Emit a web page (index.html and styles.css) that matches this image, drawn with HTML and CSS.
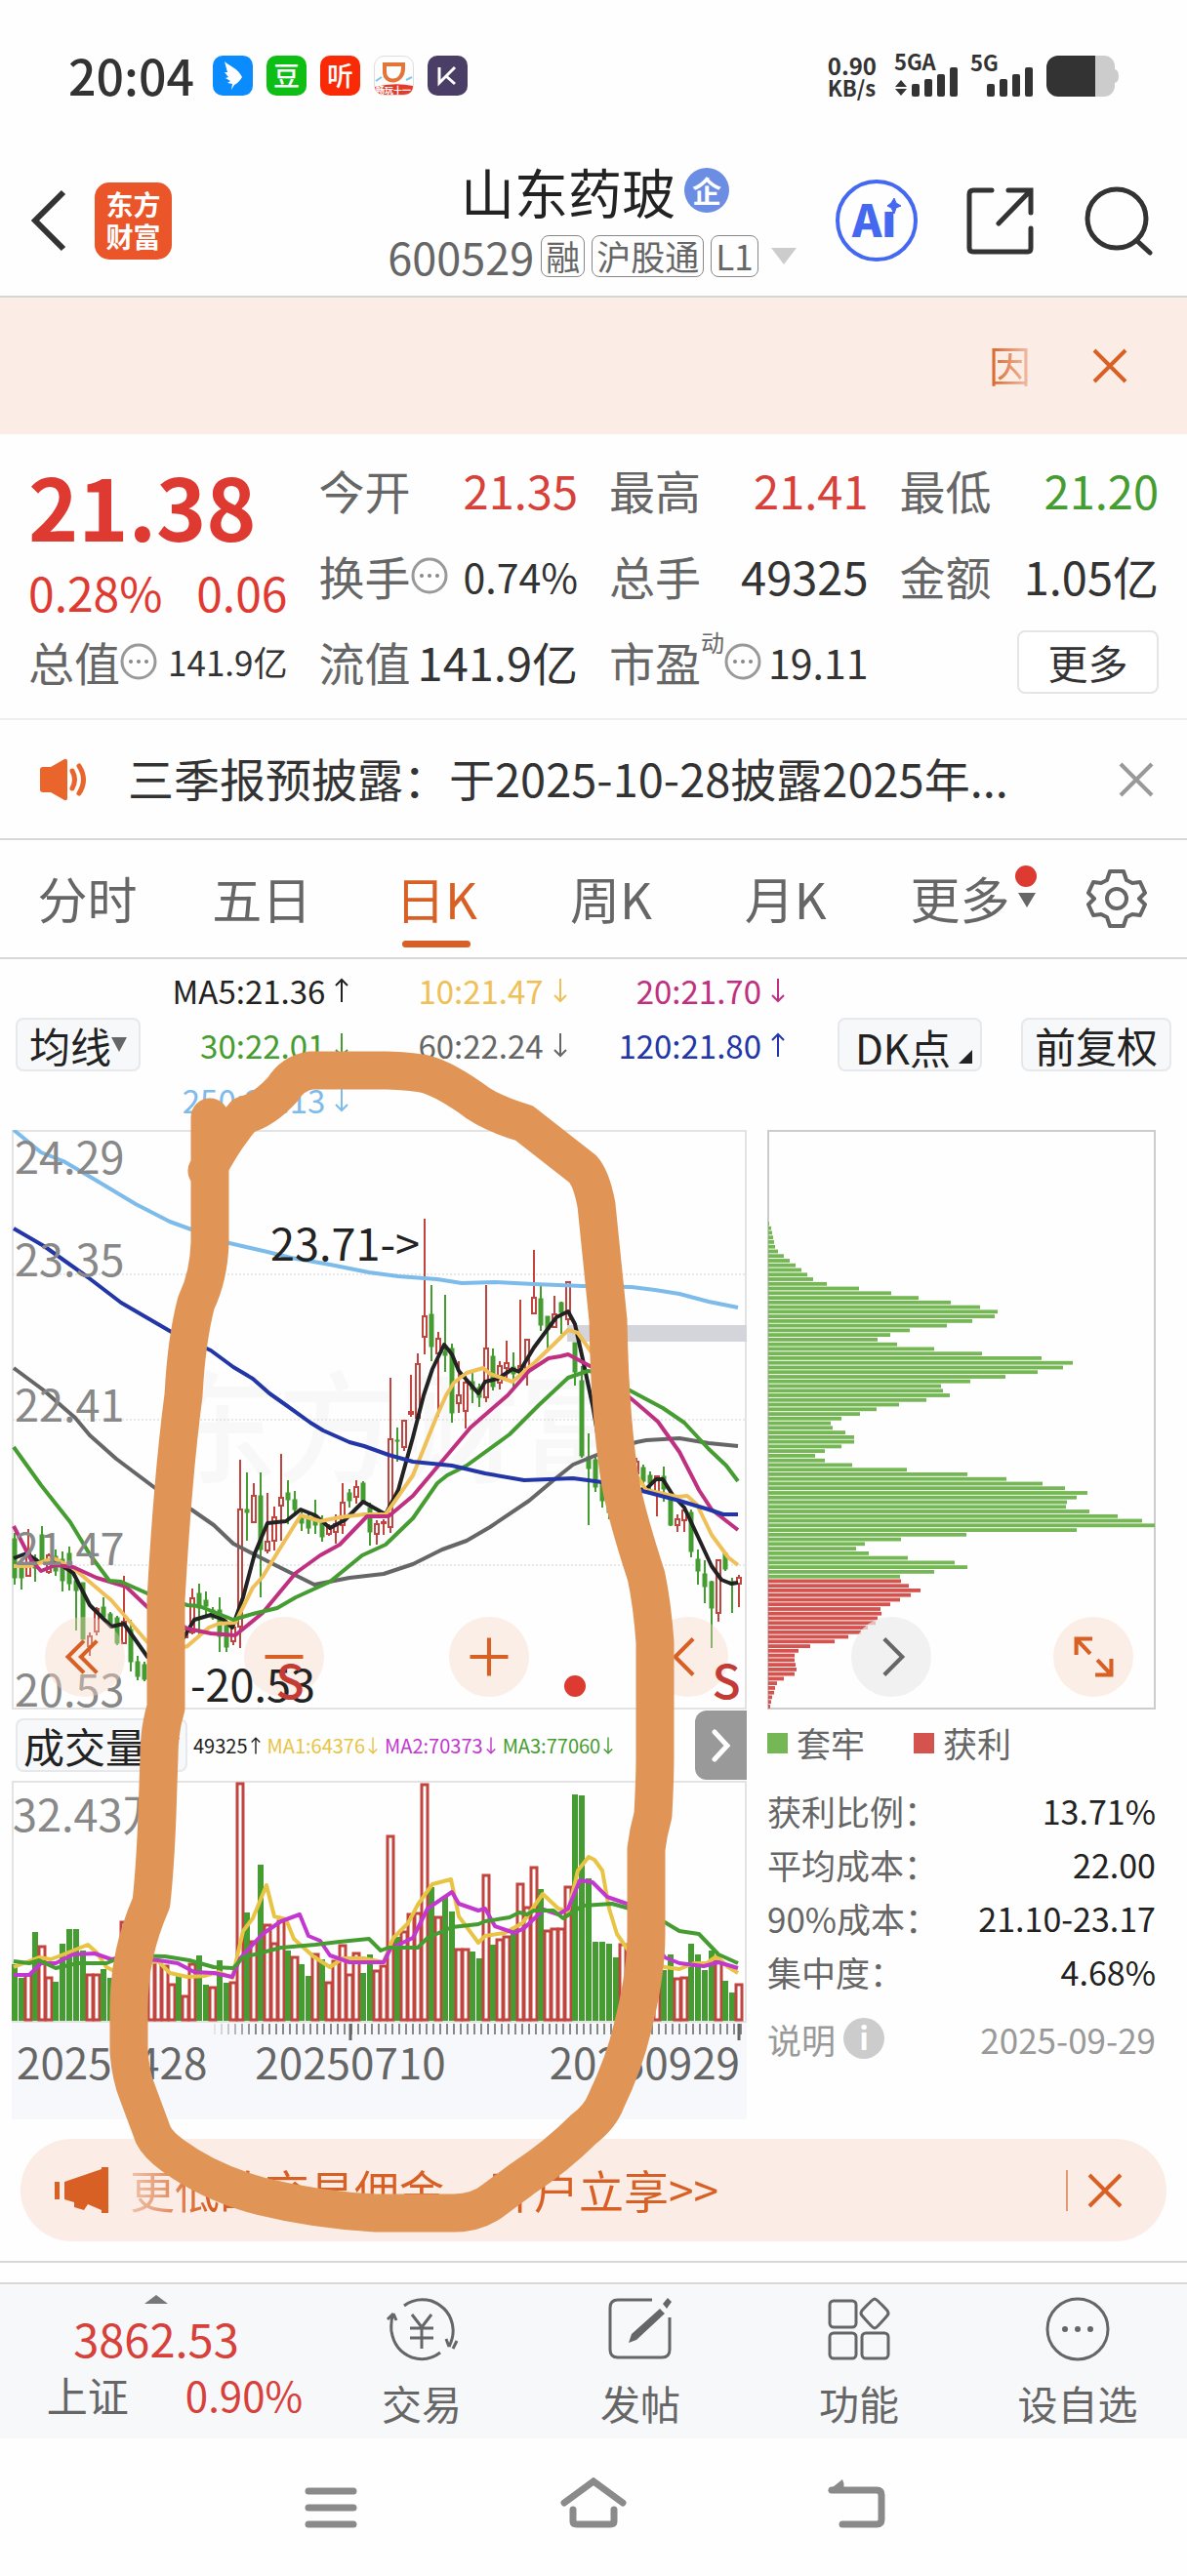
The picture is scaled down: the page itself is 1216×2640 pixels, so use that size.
FILE: index.html
```html
<!DOCTYPE html>
<html lang="zh-CN">
<head>
    <meta charset="UTF-8">
    <meta name="viewport" content="width=device-width, initial-scale=1.0">
    <title>山东药玻 600529</title>
    <link rel="stylesheet" href="styles.css">
</head>
<body>
    <svg class="defs" width="0" height="0" aria-hidden="true">
        <symbol id="up" viewBox="0 0 14 26"><path d="M7 25V2M1 8l6-6 6 6" fill="none" stroke="currentColor" stroke-width="2"/></symbol>
        <symbol id="down" viewBox="0 0 14 26"><path d="M7 1v23M1 18l6 6 6-6" fill="none" stroke="currentColor" stroke-width="2"/></symbol>
        <symbol id="close" viewBox="0 0 36 36"><path d="M2 2l32 32M34 2L2 34" fill="none" stroke="currentColor" stroke-width="4"/></symbol>
        <symbol id="dots" viewBox="0 0 38 38"><circle cx="19" cy="19" r="17" fill="none" stroke="#999" stroke-width="3"/><g fill="#888"><circle cx="11" cy="19" r="2"/><circle cx="19" cy="19" r="2"/><circle cx="27" cy="19" r="2"/></g></symbol>
    </svg>

    <!-- status bar -->
    <div class="status-bar">
        <span class="clock">20:04</span>
        <div class="app-icons">
            <svg viewBox="0 0 41 41"><rect width="41" height="41" rx="10" fill="#0a8cff"/><path d="M12 6c4 4 14 7 18 16-2 4-6 7-8 8l-3 5 1-6-5-1 3-2-5-3 3-1-4-5 3 0z" fill="#fff"/></svg>
            <span class="app app-green">豆</span>
            <span class="app app-red">听</span>
            <svg viewBox="0 0 41 41"><rect x=".5" y=".5" width="40" height="40" rx="10" fill="#fdfdfd" stroke="#ddd"/><path d="M11 9h19v4c0 16-19 16-19 4z" fill="none" stroke="#e37538" stroke-width="4"/><path d="M2 26l6-4M33 25l6-3" stroke="#7cc8e8" stroke-width="2"/><path d="M1 32q20-5 39-1c0 6-4 9-10 9H11c-6 0-9-2-10-8z" fill="#e8382a"/><text x="20" y="39" font-size="9" font-weight="700" fill="#fff" text-anchor="middle">畅玩十一</text></svg>
            <svg viewBox="0 0 41 41"><rect width="41" height="41" rx="10" fill="#4a3d66"/><path d="M12 12v16L28 12M19 21l9 8" fill="none" stroke="#fff" stroke-width="3"/></svg>
        </div>
        <div class="net-speed"><span>0.90</span><span>KB/s</span></div>
        <svg class="signal" viewBox="0 0 66 42"><text x="0" y="15">5GA</text><path d="M1 32l6-7 6 7zM1 34l6 7 6-7z"/><rect x="18" y="29" width="8" height="13" rx="2"/><rect x="31" y="24" width="8" height="18" rx="2"/><rect x="44" y="19" width="8" height="23" rx="2"/><rect x="57" y="12" width="8" height="30" rx="2"/></svg>
        <svg class="signal" viewBox="0 0 66 42"><text x="0" y="16">5G</text><rect x="17" y="29" width="8" height="13" rx="2"/><rect x="30" y="24" width="8" height="18" rx="2"/><rect x="43" y="19" width="8" height="23" rx="2"/><rect x="56" y="12" width="8" height="30" rx="2"/></svg>
        <svg class="battery" viewBox="0 0 75 42"><path d="M49 0h10a11 11 0 0 1 11 11v3q4 1 4 7t-4 7v3a11 11 0 0 1-11 11H49z" fill="#ccc"/><path d="M12 0h38v42H12A12 12 0 0 1 0 30V12A12 12 0 0 1 12 0z" fill="#333"/></svg>
    </div>

    <!-- header -->
    <header class="header">
        <div class="header-left">
            <button type="button" class="icon-btn" aria-label="返回"><svg width="38" height="64" viewBox="0 0 38 64"><path d="M34 3L5 32l29 29" fill="none" stroke="#333" stroke-width="6"/></svg></button>
            <div class="logo">东方<br>财富</div>
        </div>
        <div class="header-title">
            <h1>山东药玻<span class="badge">企</span></h1>
            <div class="stock-code">600529<span class="tag">融</span><span class="tag">沪股通</span><span class="tag">L1</span><i class="tri-down"></i></div>
        </div>
        <div class="header-right">
            <button type="button" class="icon-btn" aria-label="AI"><svg width="84" height="84" viewBox="0 0 84 84"><circle cx="42" cy="42" r="40" fill="none" stroke="#4468f0" stroke-width="4"/><text x="17" y="59" class="ai-text">Aı</text><path d="M60 19l2 5 5 3-5 2-2 6-3-6-4-2 4-3z" fill="#4468f0" stroke="#4468f0" stroke-width="1"/></svg></button>
            <button type="button" class="icon-btn" aria-label="分享"><svg width="70" height="70" viewBox="0 0 70 70"><path d="M26 4H7q-4 0-4 4v55q0 4 4 4h56q3 0 3-4V43M43 4h23v23M65 5L33 38" fill="none" stroke="#333" stroke-width="5" stroke-linecap="round"/></svg></button>
            <button type="button" class="icon-btn" aria-label="搜索"><svg width="72" height="72" viewBox="0 0 72 72"><circle cx="34" cy="34" r="30" fill="none" stroke="#333" stroke-width="5"/><path d="M55 57l13 12" stroke="#333" stroke-width="5" stroke-linecap="round"/></svg></button>
        </div>
    </header>

    <div class="alert-bar">
        <span class="alert-text">因</span>
        <button type="button" class="icon-btn orange" aria-label="关闭"><svg width="36" height="36"><use href="#close"/></svg></button>
    </div>

    <!-- quote -->
    <section class="quote">
        <div class="price-box">
            <div class="price">21.38</div>
            <div class="change"><span>0.28%</span><span>0.06</span></div>
        </div>
        <div class="cell"><span>今开</span><b class="red">21.35</b></div>
        <div class="cell"><span>最高</span><b class="red">21.41</b></div>
        <div class="cell"><span>最低</span><b class="green">21.20</b></div>
        <div class="cell"><span>换手</span><svg class="dots"><use href="#dots"/></svg><b class="mid">0.74%</b></div>
        <div class="cell"><span>总手</span><b>49325</b></div>
        <div class="cell"><span>金额</span><b>1.05亿</b></div>
        <div class="cell"><span>总值</span><svg class="dots"><use href="#dots"/></svg><b class="small">141.9亿</b></div>
        <div class="cell"><span>流值</span><b>141.9亿</b></div>
        <div class="cell"><span>市盈</span><sup>动</sup><svg class="dots"><use href="#dots"/></svg><b class="mid">19.11</b></div>
        <div class="cell cell-more"><button type="button" class="more-btn">更多</button></div>
    </section>

    <div class="notice">
        <svg width="54" height="44" viewBox="0 0 54 44"><path d="M2 12q0-3 3-3h8L27 1q3-1 3 2v38q0 3-3 2L13 35H5q-3 0-3-3z" fill="#e9652b"/><path d="M35 13q5 9 0 18M42 8q9 14 0 28" fill="none" stroke="#e9652b" stroke-width="5" stroke-linecap="round"/></svg>
        <p>三季报预披露：于2025-10-28披露2025年...</p>
        <button type="button" class="icon-btn gray" aria-label="关闭"><svg width="36" height="36"><use href="#close"/></svg></button>
    </div>

    <nav class="tabs">
        <a href="#">分时</a>
        <a href="#">五日</a>
        <a href="#" class="active">日K</a>
        <a href="#">周K</a>
        <a href="#">月K</a>
        <a href="#" class="tab-more">更多<i class="tri-small"></i><i class="red-dot"></i></a>
        <button type="button" class="icon-btn" aria-label="设置"><svg width="62" height="62" viewBox="0 0 62 62"><path d="M24 3h14l3 9 6 3 8-1 5 11-6 6 6 6-5 11-8-1-6 3-3 9H24l-3-9-6-3-8 1-5-11 6-6-6-6 5-11 8 1 6-3z" fill="none" stroke="#666" stroke-width="4" stroke-linejoin="round"/><circle cx="31" cy="31" r="10" fill="none" stroke="#666" stroke-width="4"/></svg></button>
    </nav>

    <!-- charts -->
    <section class="chart-section">
        <div class="toolbar">
            <button type="button" class="chip">均线<i class="tri-small"></i></button>
            <div class="ma-list">
                <span class="c-black">MA5:21.36<svg class="arrow"><use href="#up"/></svg></span>
                <span class="c-yellow">10:21.47<svg class="arrow"><use href="#down"/></svg></span>
                <span class="c-magenta">20:21.70<svg class="arrow"><use href="#down"/></svg></span>
                <span class="c-green">30:22.01<svg class="arrow"><use href="#down"/></svg></span>
                <span class="c-gray">60:22.24<svg class="arrow"><use href="#down"/></svg></span>
                <span class="c-blue">120:21.80<svg class="arrow"><use href="#up"/></svg></span>
                <span class="c-sky">250:22.13<svg class="arrow"><use href="#down"/></svg></span>
            </div>
            <button type="button" class="chip chip-dk">DK点<i class="tri-corner"></i></button>
            <button type="button" class="chip">前复权</button>
        </div>

        <div class="charts">
            <div class="left-col">
                <div class="k-chart">
                    <svg id="kline" viewBox="0 0 753 594"></svg>
                    <button type="button" class="round-btn pos-1" aria-label="快退"><svg viewBox="0 0 80 80"><path d="M39 24L23 40l16 16M52 24L36 40l16 16"/></svg></button>
                    <button type="button" class="round-btn pos-2" aria-label="缩小"><svg viewBox="0 0 80 80"><path d="M21 40h38"/></svg></button>
                    <button type="button" class="round-btn pos-3" aria-label="放大"><svg viewBox="0 0 80 80"><path d="M21 40h38M40 21v38"/></svg></button>
                    <button type="button" class="round-btn pos-4" aria-label="左移"><svg viewBox="0 0 80 80"><path d="M45 22L27 40l18 18"/></svg></button>
                    <svg class="k-marks" viewBox="0 0 753 594">
                        <text x="311" y="586" text-anchor="end" fill="#222">-20.53</text>
                        <text x="285" y="583" text-anchor="middle" fill="#c43b35" class="mark-s">S</text>
                        <text x="732" y="583" text-anchor="middle" fill="#c43b35" class="mark-s">S</text>
                        <circle cx="577" cy="570" r="11" fill="#dd3a32"/>
                    </svg>
                </div>
                <div class="vol-head">
                    <button type="button" class="chip chip-vol">成交量<i class="tri-small"></i></button>
                    <span class="c-black">49325<svg class="arrow"><use href="#up"/></svg></span>
                    <span class="c-gold">MA1:64376<svg class="arrow"><use href="#down"/></svg></span>
                    <span class="c-purple">MA2:70373<svg class="arrow"><use href="#down"/></svg></span>
                    <span class="c-green">MA3:77060<svg class="arrow"><use href="#down"/></svg></span>
                    <button type="button" class="side-btn" aria-label="展开"><svg width="20" height="34" viewBox="0 0 20 34"><path d="M3 3l13 14L3 31" fill="none" stroke="#fff" stroke-width="5" stroke-linecap="round"/></svg></button>
                </div>
                <svg id="volume" viewBox="0 0 753 347"></svg>
            </div>

            <div class="right-col">
                <div class="chip-chart">
                    <svg id="chips" viewBox="0 0 398 594"></svg>
                    <button type="button" class="round-btn round-gray pos-5" aria-label="下一个"><svg viewBox="0 0 80 80"><path d="M33 22l18 18-18 18"/></svg></button>
                    <button type="button" class="round-btn pos-6" aria-label="全屏"><svg viewBox="0 0 80 80"><path d="M23 38V22h16M23 22l14 15M44 43l14 15M42 58h16V42"/></svg></button>
                </div>
                <div class="legend"><span><i class="sq sq-green"></i>套牢</span><span><i class="sq sq-red"></i>获利</span></div>
                <dl class="stats">
                    <dt>获利比例：</dt><dd>13.71%</dd>
                    <dt>平均成本：</dt><dd>22.00</dd>
                    <dt>90%成本：</dt><dd>21.10-23.17</dd>
                    <dt>集中度：</dt><dd>4.68%</dd>
                </dl>
                <div class="explain"><span>说明</span><i class="info">i</i><time>2025-09-29</time></div>
            </div>
        </div>

        <div class="promo">
            <svg width="56" height="48" viewBox="0 0 56 48"><path d="M0 15h5v18H0zM10 15L48 2V0h7v47h-7v-3L34 38l-4 6-10-3 0-5-10-3z" fill="#d96024"/></svg>
            <a href="#">更低的交易佣金，开户立享&gt;&gt;</a>
            <button type="button" class="icon-btn orange promo-close" aria-label="关闭"><svg width="36" height="36"><use href="#close"/></svg></button>
        </div>

        <!-- hand drawn marker -->
        <svg class="marker" viewBox="0 0 1216 1335"><path d="M215 162V290Q214 325 201 352Q191 390 188 447Q177 530 170 657V767Q163 790 163 817L161 877Q159 930 155 967Q143 995 138 1019Q132 1045 132 1077V1120Q134 1145 141 1162L157 1205Q162 1215 177 1226Q215 1254 268 1268Q325 1282 385 1285H465Q490 1285 508 1270L535 1250Q570 1227 598 1199Q615 1186 621 1170Q640 1130 648 1095Q662 1040 662 1000V912Q664 895 669 877Q671 840 671 817V700Q668 660 662 632Q645 580 637 544Q625 480 623 370L611 252Q606 225 597 215L537 168Q500 157 482 142Q450 120 432 117Q410 114 395 114H318Q300 117 290 133Q270 155 250 160Q230 182 212 217"/></svg>
    </section>

    <!-- bottom bar -->
    <div class="bottom-bar">
        <div class="index-box">
            <i class="tri-up"></i>
            <strong>3862.53</strong>
            <div class="index-row"><span>上证</span><span class="red">0.90%</span></div>
        </div>
        <a href="#"><svg viewBox="0 0 76 68"><path d="M20 10Q32 1 48 5Q68 13 70 33Q71 42 66 52M70 54l4-8M66 52l-3-8M57 58Q44 68 28 63Q10 56 7 36Q6 26 9 18M9 18l-6 6M9 18l3 7" fill="none" stroke="#666" stroke-width="3"/><path d="M28 19l10 13 10-13M26 33h24M26 43h24M38 32v22" fill="none" stroke="#666" stroke-width="3"/></svg>交易</a>
        <a href="#"><svg viewBox="0 0 76 68"><path d="M50 4H15q-8 0-8 8v43q0 8 8 8h45q8 0 8-8V22" fill="none" stroke="#666" stroke-width="3"/><path d="M61 8l5-6 4 4-5 7zM58 13l5 5-29 27-8 3 3-9z" fill="#666"/></svg>发帖</a>
        <a href="#"><svg viewBox="0 0 76 68"><g fill="none" stroke="#666" stroke-width="3"><rect x="8" y="5" width="27" height="27" rx="4"/><rect x="8" y="38" width="27" height="26" rx="4"/><rect x="41" y="38" width="27" height="26" rx="4"/><path d="M54 3q2 0 13 12 2 3 0 5-11 13-13 13t-13-13q-2-2 0-5Q52 3 54 3z"/></g></svg>功能</a>
        <a href="#"><svg viewBox="0 0 76 68"><circle cx="38" cy="34" r="31" fill="none" stroke="#666" stroke-width="3"/><g fill="#666"><circle cx="25" cy="34" r="3"/><circle cx="38" cy="34" r="3"/><circle cx="51" cy="34" r="3"/></g></svg>设自选</a>
    </div>

    <div class="system-nav">
        <button type="button" class="icon-btn" aria-label="菜单"><svg width="68" height="52" viewBox="0 0 68 52"><path d="M11 14h46M11 31h46M11 48h46" stroke="#8a8a8a" stroke-width="7" stroke-linecap="round"/></svg></button>
        <button type="button" class="icon-btn" aria-label="主页"><svg width="68" height="52" viewBox="0 0 68 52"><path d="M4 26L34 4l30 22M13 33v12q0 3 4 3h34q4 0 4-3V33" fill="none" stroke="#8a8a8a" stroke-width="7" stroke-linecap="round"/></svg></button>
        <button type="button" class="icon-btn" aria-label="后退"><svg width="68" height="52" viewBox="0 0 68 52"><path d="M9 13h46q5 0 5 5v25q0 5-5 5H20" fill="none" stroke="#8a8a8a" stroke-width="7" stroke-linecap="round"/><path d="M5 14L20 2q4 8-2 14z" fill="#8a8a8a"/></svg></button>
    </div>

    <script src="script.js"></script>
</body>
</html>
```
FILE: styles.css
```css
* {
    box-sizing: border-box;
}
body {
    margin: 0;
    background: #fefefe;
    color: #333;
    font-family: "Noto Sans CJK SC", "Noto Sans", sans-serif;
}
a {
    color: inherit;
    text-decoration: none;
}
button {
    font-family: inherit;
    color: inherit;
    padding: 0;
    cursor: pointer;
}
svg {
    display: block;
}
svg text {
    font-family: "Noto Sans CJK SC", "Noto Sans", sans-serif;
}
.defs {
    position: absolute;
}
.icon-btn {
    border: none;
    background: none;
    display: flex;
    align-items: center;
    justify-content: center;
}
.red {
    color: #d8403a;
}
.green {
    color: #459c30;
}
.orange {
    color: #d96024;
}
.gray {
    color: #999;
}
.c-black { color: #222; }
.c-yellow { color: #efbf58; }
.c-gold { color: #e8c444; }
.c-magenta { color: #c03080; }
.c-purple { color: #c238cf; }
.c-green { color: #459c30; }
.c-gray { color: #666; }
.c-blue { color: #2236a8; }
.c-sky { color: #7cbbea; }

/* triangles */
.tri-down {
    border: 13px solid transparent;
    border-top: 17px solid #ccc;
    border-bottom: 0;
}
.tri-small {
    border: 9px solid transparent;
    border-top: 15px solid #666;
    border-bottom: 0;
}
.tri-up {
    border: 12px solid transparent;
    border-bottom: 9px solid #777;
    border-top: 0;
}
.tri-corner {
    border: 7px solid #222;
    border-top-color: transparent;
    border-left-color: transparent;
}

/* status bar */
.status-bar {
    display: flex;
    align-items: center;
    height: 155px;
    padding: 0 69px 0 70px;
}
.clock {
    font-size: 50px;
    line-height: 60px;
    font-weight: 500;
    padding-bottom: 3px;
}
.app-icons {
    display: flex;
    gap: 14px;
    margin-left: 19px;
    flex: 1;
}
.app-icons svg {
    width: 41px;
    height: 41px;
}
.app {
    width: 41px;
    height: 41px;
    border-radius: 10px;
    color: #fff;
    font-size: 27px;
    line-height: 40px;
    font-weight: 500;
    text-align: center;
}
.app-green {
    background: #0dbe14;
}
.app-red {
    background: #fb2a06;
}
.net-speed {
    display: flex;
    flex-direction: column;
    font-size: 24px;
    line-height: 22px;
    font-weight: 700;
    margin-right: 18px;
}
.net-speed span + span {
    font-size: 22px;
}
.signal {
    width: 66px;
    height: 42px;
    margin-right: 12px;
    fill: #333;
    overflow: visible;
}
.signal text {
    font-size: 22px;
    font-weight: 700;
}
.battery {
    width: 75px;
    height: 42px;
}

/* header */
.header {
    display: grid;
    grid-template-columns: 1fr auto 1fr;
    align-items: center;
    height: 150px;
    padding: 0 34px 6px 31px;
    border-bottom: 2px solid #d5d5d5;
}
.header-left {
    display: flex;
    align-items: center;
    gap: 28px;
}
.logo {
    width: 79px;
    height: 79px;
    padding-top: 6px;
    border-radius: 15px;
    background: #ea5629;
    color: #fff;
    font-size: 28px;
    line-height: 33px;
    font-weight: 700;
    text-align: center;
}
.header-title {
    padding-top: 5px;
}
.header-title h1 {
    display: flex;
    align-items: center;
    justify-content: center;
    gap: 9px;
    margin: 0;
    padding-left: 6px;
    font-size: 55px;
    line-height: 68px;
    font-weight: 400;
    color: #222;
}
.badge {
    width: 46px;
    height: 46px;
    border-radius: 50%;
    background: #6b8ee4;
    color: #fff;
    font-size: 30px;
    line-height: 44px;
    font-weight: 700;
    text-align: center;
}
.stock-code {
    display: flex;
    align-items: center;
    justify-content: center;
    font-size: 45px;
    line-height: 68px;
    color: #666;
}
.tag {
    height: 43px;
    margin-left: 7px;
    padding: 0 4px;
    border: 1px solid #888;
    border-radius: 8px;
    font-size: 35px;
    line-height: 40px;
}
.stock-code .tri-down {
    margin-left: 13px;
}
.header-right {
    display: flex;
    align-items: center;
    justify-content: flex-end;
    gap: 50px;
}
.header-right .ai-text {
    fill: #4468f0;
    font-size: 46px;
    font-weight: 900;
}

.alert-bar {
    display: flex;
    align-items: center;
    justify-content: flex-end;
    gap: 63px;
    height: 140px;
    padding-right: 61px;
    background: #fbede5;
}
.alert-text {
    color: #d96024;
    font-size: 43px;
    line-height: 64px;
    padding-bottom: 4px;
    -webkit-mask-image: linear-gradient(to right, #000, rgba(0, 0, 0, 0.3));
    mask-image: linear-gradient(to right, #000, rgba(0, 0, 0, 0.3));
}

/* quote */
.quote {
    display: grid;
    grid-template-columns: repeat(4, 1fr);
    grid-auto-rows: 88px;
    column-gap: 32px;
    padding: 13px 29px 14px;
    border-bottom: 2px solid #eee;
}
.price-box {
    grid-row: span 2;
    color: #df3a32;
}
.price {
    font-size: 87px;
    line-height: 118px;
    font-weight: 700;
}
.change {
    display: flex;
    justify-content: space-between;
    font-size: 48px;
    line-height: 60px;
}
.cell {
    display: flex;
    align-items: center;
    font-size: 47px;
    line-height: 60px;
    color: #666;
    white-space: nowrap;
}
.cell b {
    margin-left: auto;
    font-weight: 400;
    color: #333;
}
.cell b.red {
    color: #d8403a;
}
.cell b.green {
    color: #459c30;
}
.cell b.mid {
    font-size: 41px;
}
.cell b.small {
    font-size: 35px;
}
.cell sup {
    align-self: flex-start;
    font-size: 24px;
    line-height: 48px;
}
.dots {
    width: 38px;
    height: 38px;
    flex: none;
}
.cell-more {
    justify-content: flex-end;
}
.more-btn {
    width: 145px;
    height: 65px;
    border: 2px solid #e5e5e5;
    border-radius: 8px;
    background: #fff;
    color: #333;
    font-size: 41px;
    line-height: 56px;
}

.notice {
    display: flex;
    align-items: center;
    height: 123px;
    padding: 0 34px 0 39px;
    border-bottom: 2px solid #d8d8d8;
}
.notice p {
    flex: 1;
    margin: 0 0 0 38px;
    padding-bottom: 4px;
    font-size: 47px;
    line-height: 60px;
}

/* tabs */
.tabs {
    display: grid;
    grid-template-columns: repeat(6, 5fr) 4fr;
    align-items: stretch;
    height: 122px;
    border-bottom: 2px solid #d8d8d8;
    font-size: 51px;
    line-height: 118px;
    text-align: center;
    color: #666;
}
.tabs a {
    position: relative;
}
.tabs .active {
    color: #d96024;
}
.active::after {
    content: "";
    position: absolute;
    left: 50%;
    bottom: 10px;
    width: 70px;
    height: 7px;
    margin-left: -35px;
    border-radius: 4px;
    background: #d96024;
}
.tab-more .tri-small {
    position: absolute;
    right: 12px;
    top: 54px;
}
.red-dot {
    position: absolute;
    right: 11px;
    top: 26px;
    width: 22px;
    height: 22px;
    border-radius: 50%;
    background: #dd3a32;
}

/* toolbar */
.chart-section {
    position: relative;
    padding-bottom: 20px;
    border-bottom: 2px solid #d8d8d8;
}
.toolbar {
    display: flex;
    align-items: center;
    height: 175px;
    padding: 0 16px;
}
.chip {
    display: flex;
    align-items: center;
    justify-content: center;
    height: 55px;
    padding: 0 12px;
    border: 2px solid #e6e8eb;
    border-radius: 8px;
    background: #f7f8fa;
    color: #222;
    font-size: 42px;
    line-height: 47px;
    white-space: nowrap;
}
.chip-dk {
    width: 148px;
    margin: 0 40px 0 54px;
    align-items: flex-end;
    padding: 0 4px 0 12px;
}
.chip-dk .tri-corner {
    margin: 0 0 6px 8px;
}
.toolbar .chip .tri-small {
    border-left-width: 8px;
    border-right-width: 8px;
}
.ma-list {
    flex: 1;
    display: grid;
    grid-template-columns: 213fr 223fr 223fr;
    font-size: 33px;
    line-height: 56px;
}
.ma-list span {
    display: flex;
    align-items: center;
    justify-content: flex-end;
}
.arrow {
    width: 14px;
    height: 26px;
    margin-left: 10px;
}

/* charts */
.charts {
    display: flex;
    gap: 21px;
    padding: 0 32px 0 12px;
}
.left-col {
    flex: 753;
    min-width: 0;
}
.right-col {
    flex: 398;
    min-width: 0;
    font-size: 35px;
    color: #666;
}
.k-chart,
.chip-chart {
    position: relative;
}
.k-chart svg,
.chip-chart svg,
#volume {
    width: 100%;
    height: auto;
}
.k-marks {
    position: absolute;
    left: 0;
    top: 0;
    pointer-events: none;
}
.k-chart text {
    font-size: 45px;
}
.k-chart .mark-s {
    font-size: 48px;
    font-weight: 500;
}
.k-chart .watermark {
    font-size: 124px;
    font-weight: 500;
    fill: #f8f8f8;
}
.round-btn {
    position: absolute;
    bottom: 13px;
    width: 82px;
    height: 82px;
    margin-left: -41px;
    border: none;
    border-radius: 50%;
    background: rgba(245, 214, 197, 0.4);
}
.round-btn path {
    fill: none;
    stroke: #d96024;
    stroke-width: 4;
}
.round-gray {
    background: rgba(235, 235, 235, 0.7);
}
.round-gray path {
    stroke: #666;
}
.pos-1 { left: 10%; }
.pos-2 { left: 37%; }
.pos-3 { left: 65%; }
.pos-4 { left: 92%; }
.pos-5 { left: 32%; }
.pos-6 { left: 84%; }

.vol-head {
    display: flex;
    align-items: center;
    height: 73px;
    padding-left: 4px;
    font-size: 20px;
    line-height: 40px;
}
.chip-vol {
    width: 176px;
    padding: 0 6px;
    justify-content: space-between;
    margin-right: 6px;
}
.vol-head span {
    display: flex;
    align-items: center;
    margin-right: 7px;
}
.vol-head .arrow {
    width: 10px;
    margin-left: 3px;
}
.side-btn {
    display: flex;
    align-items: center;
    justify-content: center;
    width: 53px;
    height: 71px;
    margin-left: auto;
    border: none;
    border-radius: 12px 0 0 12px;
    background: #999;
}
.legend {
    display: flex;
    gap: 50px;
    height: 68px;
    align-items: center;
}
.legend span {
    display: flex;
    align-items: center;
    gap: 9px;
    line-height: 40px;
}
.sq {
    width: 21px;
    height: 21px;
}
.sq-green {
    background: #74b754;
}
.sq-red {
    background: #d4534e;
}
.stats {
    display: grid;
    grid-template-columns: auto auto;
    margin: 8px 0 0;
    line-height: 55px;
}
.stats dd {
    margin: 0;
    font-size: 34px;
    text-align: right;
    color: #222;
}
.explain {
    display: flex;
    align-items: center;
    height: 82px;
    color: #999;
}
.explain time {
    margin-left: auto;
}
.info {
    width: 42px;
    height: 42px;
    margin-left: 8px;
    border-radius: 50%;
    background: #ccc;
    color: #fff;
    font-size: 32px;
    line-height: 39px;
    font-style: normal;
    font-weight: 700;
    text-align: center;
}

.promo {
    display: flex;
    align-items: center;
    height: 105px;
    margin: 20px 21px 0;
    padding: 0 45px 0 35px;
    border-radius: 53px;
    background: #fbede5;
}
.promo a {
    flex: 1;
    margin-left: 21px;
    padding-bottom: 4px;
    color: #d96024;
    font-size: 46px;
    line-height: 60px;
    -webkit-mask-image: linear-gradient(to right, rgba(0, 0, 0, 0.3), #000 80px);
    mask-image: linear-gradient(to right, rgba(0, 0, 0, 0.3), #000 80px);
}
.promo-close {
    height: 42px;
    padding-left: 20px;
    border-left: 2px solid #e09a74;
}
.marker {
    position: absolute;
    left: 0;
    top: 0;
    width: 100%;
    height: auto;
    pointer-events: none;
}
.marker path {
    fill: none;
    stroke: #e09556;
    stroke-width: 39;
    stroke-linecap: round;
    stroke-linejoin: round;
}

/* bottom bar */
.bottom-bar {
    display: grid;
    grid-template-columns: 10fr repeat(4, 7fr);
    height: 160px;
    margin-top: 20px;
    border-top: 2px solid #d8d8d8;
    background: #f7f8fa;
    color: #666;
}
.bottom-bar a {
    display: flex;
    flex-direction: column;
    align-items: center;
    padding-top: 12px;
    font-size: 41px;
    line-height: 56px;
}
.bottom-bar a svg {
    width: 76px;
    height: 68px;
    margin-bottom: 13px;
}
.index-box {
    display: flex;
    flex-direction: column;
    align-items: center;
    padding-top: 11px;
    line-height: 58px;
}
.index-box strong {
    margin-top: 6px;
    font-size: 47px;
    font-weight: 400;
    color: #d8403a;
}
.index-row {
    display: flex;
    gap: 58px;
    padding-left: 38px;
    font-size: 42px;
}

.system-nav {
    display: flex;
    justify-content: center;
    align-items: center;
    gap: 201px;
    height: 132px;
}
```
FILE: script.js
```js
const RED = '#c2443e';
const GREEN = '#459c30';
const STEP = 7;

// candles: [up?, high, low, bodyTop, bodyBottom]
const candles = [
    [0,413,466,419,459],[0,439,471,445,459],[1,409,458,432,457],[0,435,463,439,449],[0,406,444,415,442],[1,434,455,436,453],[0,430,457,437,452],
    [0,432,473,440,462],[0,427,472,434,465],[0,459,513,462,472],[0,464,522,464,522],[1,515,539,519,529],[1,489,518,491,514],[0,479,502,489,499],
    [0,494,509,496,507],[0,498,528,500,526],[1,457,526,504,526],[0,502,555,512,545],[0,539,564,545,560],[0,545,565,548,563],[0,540,560,545,555],
    [1,530,556,535,550],[0,525,556,530,550],[0,520,552,525,545],[1,515,540,520,538],[1,510,521,512,520],[1,470,517,480,515],[0,465,519,475,490],
    [0,473,499,482,488],[0,489,502,492,500],[0,479,535,492,519],[0,502,535,508,530],[1,505,528,510,524],[1,338,531,389,509],[0,351,421,389,392],
    [1,362,402,375,402],[0,351,479,375,430],[1,372,434,422,431],[1,386,431,397,421],[1,332,421,377,385],[0,359,404,372,379],[0,370,396,379,389],
    [0,388,411,395,403],[0,392,414,398,408],[0,379,414,395,405],[0,395,422,400,417],[1,404,416,406,414],[1,394,424,404,412],[1,362,414,382,405],
    [0,368,387,372,380],[1,359,383,366,376],[0,360,382,362,380],[0,382,426,387,412],[1,400,425,404,414],[1,399,415,402,403],[1,254,413,317,407],
    [0,305,340,318,319],[1,297,329,298,325],[1,251,294,289,291],[1,229,295,240,295],[1,91,230,191,212],[0,159,237,189,222],[1,207,294,214,229],
    [0,169,248,227,231],[0,219,300,224,290],[1,237,290,272,280],[1,252,306,259,288],[0,249,280,258,266],[0,260,284,264,274],[1,159,279,224,274],
    [0,224,267,232,263],[1,237,266,242,259],[1,216,256,239,244],[0,228,264,243,250],[1,174,250,242,245],[1,214,262,215,244],[1,123,189,172,188],
    [0,157,206,173,200],[0,191,227,191,204],[1,170,203,189,202],[0,176,209,177,187],[1,155,200,156,194],[0,218,262,218,248],[0,242,336,257,334],
    [0,311,405,335,347],[0,335,371,338,366],[0,360,387,362,380],[0,379,399,381,392],[0,385,405,388,400],[1,375,400,380,395],[0,350,385,355,380],
    [1,336,355,340,352],[0,343,365,346,360],[0,350,369,354,362],[1,355,396,355,372],[0,345,381,355,368],[0,369,406,378,405],[1,394,412,399,405],
    [1,385,412,390,400],[0,389,438,392,432],[0,430,466,440,452],[0,441,485,455,468],[0,462,531,463,490],[1,440,504,441,495],[0,432,452,434,450],
    [0,459,495,463,466],[1,456,489,459,465]
];

// moving average lines of the price chart
const maLines = [
    ['#7cbbea', '2,0 30,23 53,32 87,52 127,76 162,94 184,102 223,116 262,125 286,131 326,138 366,146 396,150 436,153 461,157 495,156 535,158 585,160 635,161 659,164 684,168 714,176 744,182'],
    ['#666', '2,244 33,267 50,282 65,295 80,313 107,337 147,367 184,389 207,405 227,424 272,447 310,466 346,459 381,455 411,445 441,430 466,421 490,407 530,380 555,359 575,343 602,332 640,320 650,318 684,316 714,321 744,324'],
    ['#222', '2,439 15,434 28,443 45,442 63,454 80,487 102,509 115,506 139,540 160,545 177,519 187,502 204,497 217,502 226,510 237,479 249,434 262,403 281,401 296,389 311,395 326,408 341,400 360,381 383,394 396,369 411,315 422,272 431,245 443,220 451,230 458,247 478,270 485,258 498,255 513,245 520,248 535,223 558,192 570,186 577,199 585,235 595,282 602,322 620,365 640,370 651,367 660,358 667,358 677,374 689,387 704,419 717,447 727,461 737,465 744,464'],
    ['#efbf58', '2,447 18,447 43,439 63,449 102,482 139,525 160,535 180,529 202,510 212,506 229,505 247,469 257,458 276,427 296,395 316,401 336,397 361,394 383,394 411,354 436,292 445,272 453,259 466,249 483,244 490,250 513,258 535,239 555,220 570,205 580,208 596,231 625,330 650,369 682,376 692,375 702,384 717,415 734,438 744,446'],
    ['#c03080', '2,406 20,441 30,452 45,446 63,448 87,459 117,468 139,489 180,511 204,516 229,518 257,495 291,454 316,436 336,425 364,396 386,396 411,375 443,337 470,305 508,272 530,247 550,234 562,232 570,230 598,245 640,280 662,299 684,330 704,369 717,389 744,410'],
    ['#459c30', '2,325 30,364 60,402 80,435 100,462 112,463 139,475 180,487 192,488 227,502 247,496 272,490 291,479 326,463 359,436 383,425 411,398 436,362 446,354 466,344 510,312 540,282 570,254 590,247 598,248 637,269 667,285 689,300 714,327 732,344 744,360'],
    ['#2236a8', '2,101 33,119 78,151 112,177 167,209 204,226 227,243 247,255 264,270 281,282 306,300 319,308 346,320 361,324 386,333 411,340 451,344 485,352 525,359 575,357 605,361 650,371 684,380 714,389 729,394 744,394']
];

// volume bars, height in px, negative = down day
const volumes = [
    -58,-44,48,-91,77,45,-40,-79,-94,-94,-72,48,48,-53,-44,-58,102,62,-58,-55,62,62,57,38,-46,26,59,-67,-37,35,-62,-39,40,
    244,-111,82,-160,99,80,103,-72,66,-58,-46,69,-63,40,62,78,48,70,-49,-68,52,57,190,-86,92,110,111,243,-137,107,-128,-112,
    74,74,-71,-64,150,-78,84,87,-96,141,117,158,-135,93,95,95,138,-232,-231,-146,-81,-81,-79,-65,79,-68,65,-58,-62,68,
    -52,-68,44,45,-79,-68,-52,-72,62,-41,-29,38
];

const volLines = [
    ['#e8c444', '2,191 28,181 40,183 53,178 78,168 87,176 97,191 107,196 117,184 137,187 150,185 162,197 180,201 197,200 212,196 226,202 237,154 247,141 261,107 269,139 281,142 289,162 309,180 326,191 339,182 361,182 381,186 391,161 406,146 416,127 431,106 450,101 458,139 478,166 485,159 505,156 523,146 544,116 560,131 570,134 580,92 591,78 597,81 605,92 612,131 620,157 631,173 669,191 684,193 699,187 712,187 722,180 734,191 744,197'],
    ['#c238cf', '2,199 18,199 30,187 45,187 63,178 85,177 102,183 112,181 150,184 170,187 187,196 207,197 226,201 234,182 257,157 276,144 295,137 304,159 316,164 326,179 346,186 381,186 388,172 411,161 426,131 451,114 458,126 478,133 485,131 495,149 515,156 525,151 545,132 560,137 570,131 582,102 595,104 610,119 633,127 669,181 684,187 709,190 724,186 744,192'],
    ['#459c30', '2,185 18,187 28,184 45,192 68,187 97,187 117,179 157,180 182,184 207,191 227,192 237,181 276,171 311,168 336,165 366,162 378,174 386,171 416,171 426,161 451,150 478,147 485,144 510,140 520,135 528,137 535,133 555,133 565,141 585,128 615,126 633,131 669,145 684,154 704,157 724,178 744,187']
];

// chip distribution, bar length in units of 1/3 px
const locked = [4,8,12,16,19,22,31,49,67,85,103,120,137,180,278,379,461,562,651,706,696,627,548,436,375,336,397,510,658,839,936,907,829,730,621,531,537,558,487,403,334,283,226,192,198,237,265,263,226,175,144,175,258,425,613,731,844,912,982,948,918,916,987,1073,1149,1189,948,610,409,298,270,308,429,573,612,510,406];
const profit = [409,433,467,439,406,376,346,349,335,331,307,286,246,205,130,94,80,82,84,88,80,49,26,22,18,13,9,5];

function lines(list) {
    return list.map(l => `<polyline points="${l[1]}" fill="none" stroke="${l[0]}" stroke-width="4" stroke-linejoin="round"/>`).join('');
}

function drawKline() {
    let s = '<rect x="1" y="1" width="751" height="592" fill="none" stroke="#e3e3e3" stroke-width="2"/>';
    s += '<text class="watermark" x="148" y="352">东方财富</text>';
    for (const y of [148, 297, 446]) {
        s += `<path d="M1 ${y}H752" stroke="#d4d4d4" stroke-dasharray="2 2"/>`;
    }
    s += '<rect x="569" y="200" width="184" height="17" fill="#d4d5db"/>';
    candles.forEach((c, i) => {
        const x = 3 + i * STEP;
        const color = c[0] ? RED : GREEN;
        s += `<path d="M${x} ${c[1]}V${c[2]}" stroke="${color}" stroke-width="2"/>`;
        s += `<rect x="${x - 2}" y="${c[3]}" width="4" height="${c[4] - c[3]}" fill="${c[0] ? '#fff' : color}" stroke="${color}" stroke-width="${c[0] ? 2 : 1}"/>`;
    });
    s += lines(maLines);
    [['24.29', 45], ['23.35', 150], ['22.41', 299], ['21.47', 446], ['20.53', 591]].forEach(p => {
        s += `<text x="3" y="${p[1]}" fill="#888">${p[0]}</text>`;
    });
    s += '<text x="418" y="134" text-anchor="end" fill="#222">23.71-&gt;</text>';
    document.getElementById('kline').innerHTML = s;
}

function drawVolume() {
    let s = '<rect x="0" y="247" width="753" height="100" fill="#f7f8fb"/>';
    s += '<rect x="1" y="1" width="751" height="246" fill="none" stroke="#e3e3e3" stroke-width="2"/>';
    s += '<text x="1" y="52" font-size="45" fill="#888">32.43万</text>';
    volumes.forEach((v, i) => {
        const x = 3 + i * STEP;
        const h = Math.abs(v);
        if (v > 0) {
            s += `<rect x="${x - 3}" y="${247 - h}" width="6" height="${h - 2}" fill="#fff" stroke="${RED}" stroke-width="3"/>`;
        } else {
            s += `<rect x="${x - 3}" y="${246 - h}" width="6" height="${h}" fill="${GREEN}"/>`;
        }
    });
    s += lines(volLines);
    for (let x = 208; x < 750; x += STEP) {
        const o = Math.min(1, (x - 200) / 50);
        s += `<path d="M${x} 249v11" stroke="#888" stroke-width="2" opacity="${o}"/>`;
    }
    s += '<path d="M347 249v17M745 249v17" stroke="#666" stroke-width="3"/>';
    s += '<g font-size="44" fill="#666"><text x="5" y="306">20250428</text><text x="347" y="306" text-anchor="middle">20250710</text><text x="746" y="306" text-anchor="end">20250929</text></g>';
    document.getElementById('volume').innerHTML = s;
}

function drawChips() {
    let s = '<rect x="1" y="1" width="396" height="592" fill="none" stroke="#ccc" stroke-width="2"/>';
    locked.concat(profit).forEach((w, i) => {
        const y = 94 + i * 4.76;
        s += `<rect x="1" y="${y.toFixed(1)}" width="${Math.round(w / 3)}" height="3.8" fill="${i < locked.length ? '#74b754' : '#d4534e'}"/>`;
    });
    document.getElementById('chips').innerHTML = s;
}

drawKline();
drawVolume();
drawChips();
```
